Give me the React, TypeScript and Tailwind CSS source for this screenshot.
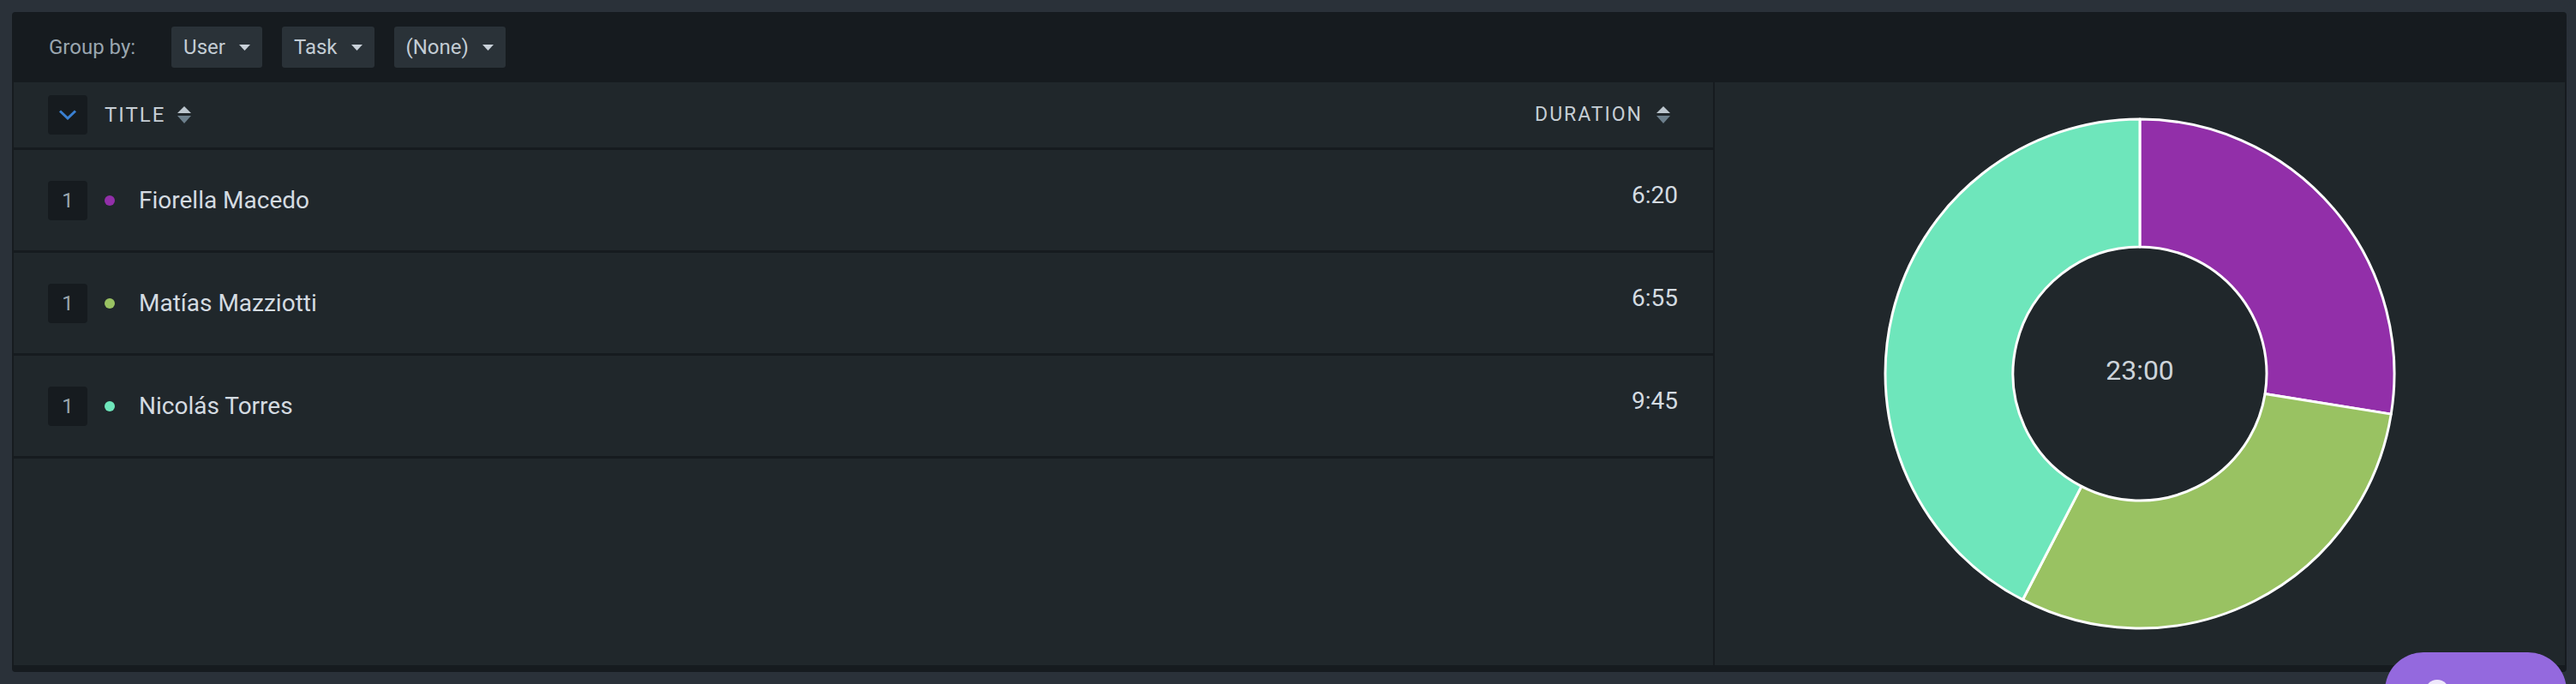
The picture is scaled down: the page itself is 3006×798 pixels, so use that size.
import React from 'react'

interface Entry {
  name:     string
  color:    string
  seconds:  number
}

const entries: Entry[] = [
  { name: 'Fiorella Macedo',  color: '#922fa9', seconds: 380 },
  { name: 'Matías Mazziotti', color: '#99c262', seconds: 415 },
  { name: 'Nicolás Torres',   color: '#6ee6bb', seconds: 585 },
]

function fmt(s: number) {
  const m = Math.floor(s / 60)
  const r = s % 60
  return `${m}:${r.toString().padStart(2, '0')}`
}

function Caret() {
  return (
    <svg width="13" height="7" viewBox="0 0 13 7" className="shrink-0">
      <path d="M0 0 H13 L6.5 7 Z" fill="#c9d1d9" />
    </svg>
  )
}

function SortIcon() {
  return (
    <svg width="16" height="20" viewBox="0 0 16 20" className="shrink-0">
      <path d="M8 0 L16 8 H0 Z" fill="#bcc6ce" />
      <path d="M0 11 H16 L8 20 Z" fill="#6c7f8c" />
    </svg>
  )
}

function Dropdown({ label }: { label: string }) {
  return (
    <div className="flex h-[48px] items-center gap-[16px] rounded-[3px] bg-[#2a3238] pl-[14px] pr-[14px] text-[24px] text-[#c3ccd4]">
      <span>{label}</span>
      <Caret />
    </div>
  )
}

function Donut({ data }: { data: Entry[] }) {
  const total = data.reduce((a, e) => a + e.seconds, 0)
  const cx = 300, cy = 300, ro = 297, ri = 148
  let start = 0
  const pt = (r: number, a: number) => {
    const rad = (a - 90) * Math.PI / 180
    return `${cx + r * Math.cos(rad)} ${cy + r * Math.sin(rad)}`
  }
  return (
    <div className="relative h-[600px] w-[600px]">
      <svg width="600" height="600" viewBox="0 0 600 600">
        {data.map((e) => {
          const sweep = (e.seconds / total) * 360
          const end = start + sweep
          const large = sweep > 180 ? 1 : 0
          const d = `M ${pt(ro, start)} A ${ro} ${ro} 0 ${large} 1 ${pt(ro, end)} L ${pt(ri, end)} A ${ri} ${ri} 0 ${large} 0 ${pt(ri, start)} Z`
          start = end
          return <path key={e.name} d={d} fill={e.color} stroke="#ffffff" strokeWidth="3" strokeLinejoin="round" />
        })}
      </svg>
      <div className="absolute inset-0 flex items-center justify-center pb-[8px] text-[32px] text-[#cdd4da]">
        {fmt(total)}
      </div>
    </div>
  )
}

export default function App() {
  return (
    <div className="relative h-[798px] w-[3006px] overflow-hidden bg-[#2a3139] pl-[14px] pr-[11px] pt-[14px] font-['Roboto',sans-serif]">
      <div className="flex h-[770px] flex-col rounded-[4px] bg-[#161b1f] px-[2px] pb-[8px]">
        {/* group by toolbar */}
        <div className="flex h-[82px] shrink-0 items-center pl-[41px]">
          <span className="mr-[42px] text-[24px] text-[#9aa6af]">Group by:</span>
          <div className="flex gap-[23px]">
            <Dropdown label="User" />
            <Dropdown label="Task" />
            <Dropdown label="(None)" />
          </div>
        </div>

        <div className="flex min-h-0 flex-1">
          {/* table */}
          <div className="flex w-[1985px] flex-col border-r-2 border-[#161b1f] bg-[#20272b]">
            <div className="flex h-[79px] shrink-0 items-center border-b-[3px] border-[#161b1f] pl-[40px] pr-[50px]">
              <div className="flex h-[46px] w-[46px] items-center justify-center rounded-[4px] bg-[#161b1f]">
                <svg width="22" height="12" viewBox="0 0 22 12">
                  <path d="M2 1.5 L11 10 L20 1.5" fill="none" stroke="#3a80d2" strokeWidth="3" />
                </svg>
              </div>
              <span className="ml-[20px] text-[24px] tracking-[2px] text-[#c6ced5]">TITLE</span>
              <span className="ml-[14px]"><SortIcon /></span>
              <span className="ml-auto text-[23px] tracking-[2px] text-[#c6ced5]">DURATION</span>
              <span className="ml-[16px]"><SortIcon /></span>
            </div>

            {entries.map((e) => (
              <div key={e.name} className="flex h-[120px] shrink-0 items-center border-b-[3px] border-[#161b1f] pl-[40px] pr-[41px]">
                <div className="flex h-[46px] w-[46px] items-center justify-center rounded-[4px] bg-[#161b1f] text-[24px] text-[#9aa6af]">
                  1
                </div>
                <span className="ml-[20px] h-[12px] w-[12px] rounded-full" style={{ background: e.color }} />
                <span className="ml-[28px] text-[28px] text-[#d4dbe1]">{e.name}</span>
                <span className="mb-[12px] ml-auto text-[28px] text-[#d4dbe1]">{fmt(e.seconds)}</span>
              </div>
            ))}
          </div>

          {/* chart */}
          <div className="flex flex-1 items-center justify-center bg-[#20272b]">
            <Donut data={entries} />
          </div>
        </div>
      </div>

      {/* floating help button */}
      <div className="absolute left-[2783px] top-[761px] h-[90px] w-[212px] rounded-[45px] bg-[#9469de]">
        <div className="absolute left-[47px] top-[32px] h-[28px] w-[28px] rounded-full bg-[#efe8fb]" />
      </div>
    </div>
  )
}
